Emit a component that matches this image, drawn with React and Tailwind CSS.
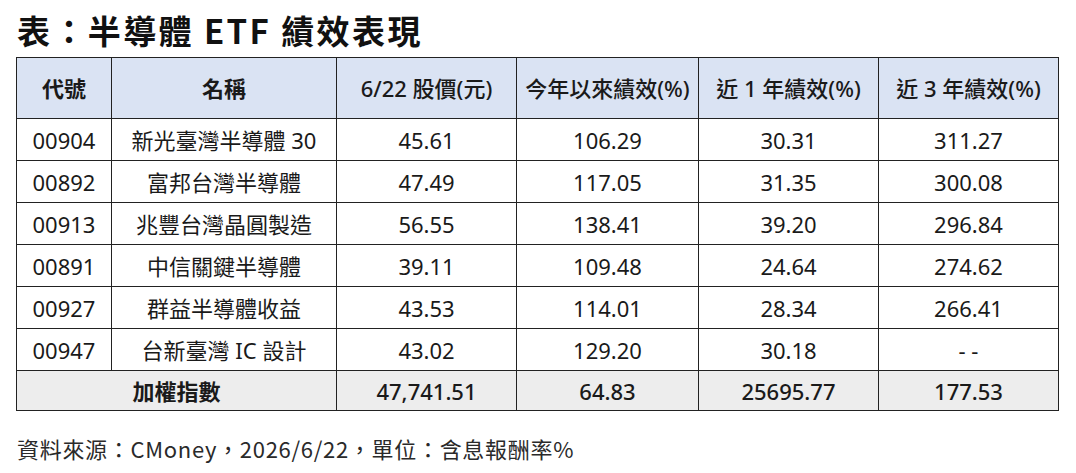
import React from 'react';

const rows = [
  ['00904', '新光臺灣半導體 30', '45.61', '106.29', '30.31', '311.27'],
  ['00892', '富邦台灣半導體', '47.49', '117.05', '31.35', '300.08'],
  ['00913', '兆豐台灣晶圓製造', '56.55', '138.41', '39.20', '296.84'],
  ['00891', '中信關鍵半導體', '39.11', '109.48', '24.64', '274.62'],
  ['00927', '群益半導體收益', '43.53', '114.01', '28.34', '266.41'],
  ['00947', '台新臺灣 IC 設計', '43.02', '129.20', '30.18', '- -'],
];

const headers = ['代號', '名稱', '6/22 股價(元)', '今年以來績效(%)', '近 1 年績效(%)', '近 3 年績效(%)'];
const widths = ['w-[95px]', 'w-[225px]', 'w-[180px]', 'w-[182px]', 'w-[180px]', 'w-[180px]'];

const font = { fontFamily: '"Noto Sans", "Noto Sans CJK TC", sans-serif' };
const cjkFirst = { fontFamily: '"Noto Sans CJK TC", "Noto Sans", sans-serif' };

const App = () => {
  return (
    <div lang="zh-TW" className="w-[1076px] h-[473px] bg-white pl-[16px] text-[#1a1a1a]" style={font}>
      {/* Title */}
      <div
        className="pt-[10px] mb-[7px] pl-[1px] text-[33px] leading-[40px] font-bold tracking-[2.4px] text-[#111]"
        style={cjkFirst}
      >
        表：半導體 ETF 績效表現
      </div>

      {/* Table */}
      <table className="table-fixed border-collapse w-[1042px] text-[22px]">
        <colgroup>
          {widths.map((w, i) => (
            <col key={i} className={w} />
          ))}
        </colgroup>
        <thead>
          <tr className="h-[61px] bg-[#dae3f3]">
            {headers.map((h, i) => (
              <th
                key={i}
                className={`border border-[#222] text-center ${i < 2 ? 'font-semibold' : 'font-medium'}`}
              >
                {h}
              </th>
            ))}
          </tr>
        </thead>
        <tbody>
          {rows.map((r, ri) => (
            <tr key={ri} className="h-[42px]">
              {r.map((c, ci) => (
                <td key={ci} className="border border-[#222] text-center leading-none">
                  {c}
                </td>
              ))}
            </tr>
          ))}
          <tr className="h-[40px] bg-[#ededed] font-medium">
            <td colSpan={2} className="border border-[#222] text-center leading-none font-semibold">
              加權指數
            </td>
            <td className="border border-[#222] text-center leading-none">47,741.51</td>
            <td className="border border-[#222] text-center leading-none">64.83</td>
            <td className="border border-[#222] text-center leading-none">25695.77</td>
            <td className="border border-[#222] text-center leading-none">177.53</td>
          </tr>
        </tbody>
      </table>

      {/* Source note */}
      <div
        className="mt-[22px] pl-[1px] text-[22px] leading-[30px] tracking-[0.7px] text-[#2a2a2a]"
        style={cjkFirst}
      >
        資料來源：CMoney，2026/6/22，單位：含息報酬率%
      </div>
    </div>
  );
};

export default App;
